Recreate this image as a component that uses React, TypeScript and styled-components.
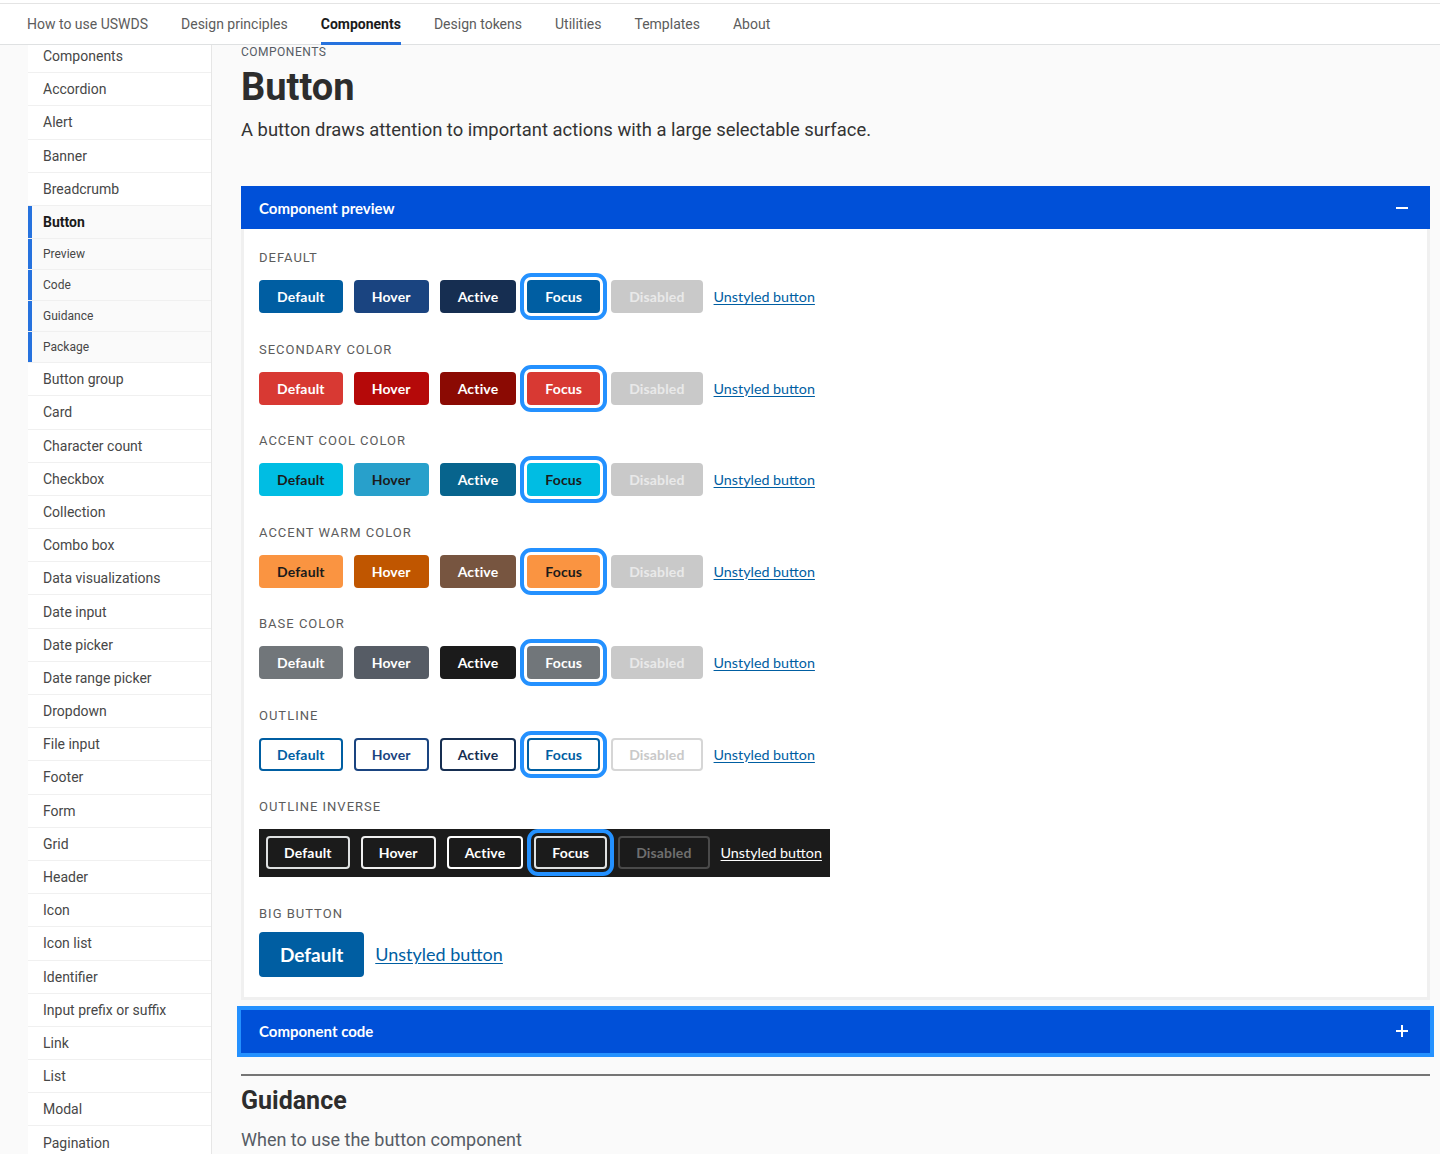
import styled, { createGlobalStyle } from "styled-components"

const GlobalStyle = createGlobalStyle`
  html, body {
    margin: 0;
    padding: 0;
    background: #fafafa;
    font-family: Roboto, "Liberation Sans", sans-serif;
    color: #1b1b1b;
  }
  * {
    box-sizing: border-box;
  }
`

const SANS = `Roboto, "Liberation Sans", sans-serif`
const SOURCE = `Lato, "Open Sans", sans-serif`

type Tone = { bg: string; fg: string; ring?: string }

interface Variant {
  label: string
  default: Tone
  hover: Tone
  active: Tone
  disabled: Tone
}

const disabledSolid: Tone = { bg: "#c9c9c9", fg: "#e9e9e9" }

const variants: Variant[] = [
  {
    label: "Default",
    default: { bg: "#005ea2", fg: "#fff" },
    hover: { bg: "#1a4480", fg: "#fff" },
    active: { bg: "#162e51", fg: "#fff" },
    disabled: disabledSolid,
  },
  {
    label: "Secondary color",
    default: { bg: "#d83933", fg: "#fff" },
    hover: { bg: "#b50909", fg: "#fff" },
    active: { bg: "#8b0a03", fg: "#fff" },
    disabled: disabledSolid,
  },
  {
    label: "Accent cool color",
    default: { bg: "#00bde3", fg: "#1b1b1b" },
    hover: { bg: "#28a0cb", fg: "#1b1b1b" },
    active: { bg: "#07648d", fg: "#fff" },
    disabled: disabledSolid,
  },
  {
    label: "Accent warm color",
    default: { bg: "#fa9441", fg: "#1b1b1b" },
    hover: { bg: "#c05600", fg: "#fff" },
    active: { bg: "#775540", fg: "#fff" },
    disabled: disabledSolid,
  },
  {
    label: "Base color",
    default: { bg: "#71767a", fg: "#fff" },
    hover: { bg: "#565c65", fg: "#fff" },
    active: { bg: "#1b1b1b", fg: "#fff" },
    disabled: disabledSolid,
  },
  {
    label: "Outline",
    default: { bg: "#fff", fg: "#005ea2", ring: "#005ea2" },
    hover: { bg: "#fff", fg: "#1a4480", ring: "#1a4480" },
    active: { bg: "#fff", fg: "#162e51", ring: "#162e51" },
    disabled: { bg: "#fff", fg: "#c9c9c9", ring: "#d6d6d6" },
  },
]

const inverse: Variant = {
  label: "Outline inverse",
  default: { bg: "transparent", fg: "#fff", ring: "#dfe1e2" },
  hover: { bg: "transparent", fg: "#fff", ring: "#f0f0f0" },
  active: { bg: "transparent", fg: "#fff", ring: "#fff" },
  disabled: { bg: "transparent", fg: "#6f6f6f", ring: "#4a4a4a" },
}

const topLinks = ["How to use USWDS", "Design principles", "Components", "Design tokens", "Utilities", "Templates", "About"]

const sideBefore = ["Components", "Accordion", "Alert", "Banner", "Breadcrumb"]
const sideSub = ["Preview", "Code", "Guidance", "Package"]
const sideAfter = [
  "Button group",
  "Card",
  "Character count",
  "Checkbox",
  "Collection",
  "Combo box",
  "Data visualizations",
  "Date input",
  "Date picker",
  "Date range picker",
  "Dropdown",
  "File input",
  "Footer",
  "Form",
  "Grid",
  "Header",
  "Icon",
  "Icon list",
  "Identifier",
  "Input prefix or suffix",
  "Link",
  "List",
  "Modal",
  "Pagination",
  "Process list",
]

const Page = styled.div`
  display: flex;
  flex-direction: column;
  height: 100vh;
  overflow: hidden;
`

const TopBar = styled.header`
  background: #fff;
  padding-top: 3px;
  flex-shrink: 0;
`

const TopNav = styled.nav`
  display: flex;
  height: 42px;
  padding-left: 10.5px;
  border-top: 1px solid #e4e4e4;
  border-bottom: 1px solid #dfe1e2;
`

const TopLink = styled.a<{ $current?: boolean }>`
  display: flex;
  align-items: center;
  height: 41px;
  margin: 0 16.5px -1px;
  padding-bottom: 2px;
  font-family: ${SANS};
  font-size: 14px;
  font-weight: ${(p) => (p.$current ? 700 : 400)};
  color: ${(p) => (p.$current ? "#1b1b1b" : "#5c5c5c")};
  text-decoration: none;
  box-shadow: ${(p) => (p.$current ? "inset 0 -3px 0 #2672de" : "none")};
`

const Layout = styled.div`
  flex: 1;
  min-height: 0;
  display: flex;
  gap: 29px;
  padding: 0 10px 0 28px;
  overflow: hidden;
`

const Sidebar = styled.ul`
  width: 184px;
  flex-shrink: 0;
  margin: -5px 0 0;
  padding: 0;
  list-style: none;
  background: #fff;
  border-right: 1px solid #e6e6e6;
`

const SideItem = styled.li<{ $sub?: boolean; $current?: boolean; $group?: boolean }>`
  display: flex;
  align-items: center;
  height: ${(p) => (p.$sub ? "31px" : "33.2px")};
  padding-left: 15px;
  border-bottom: 1px solid #f0f0f0;
  font-family: ${SANS};
  font-size: ${(p) => (p.$sub ? "12px" : "14px")};
  font-weight: ${(p) => (p.$current ? 700 : 400)};
  color: ${(p) => (p.$current ? "#1b1b1b" : "#474747")};
  background: ${(p) => (p.$group ? "#fafafa" : "#fff")};
  box-shadow: ${(p) => (p.$group ? "inset 4px 0 0 #2672de" : "none")};
`

const Main = styled.main`
  flex: 1;
  min-width: 0;
`

const Eyebrow = styled.div`
  margin-top: 1px;
  font-family: ${SANS};
  font-size: 12px;
  line-height: 12px;
  letter-spacing: 0.5px;
  color: #565c65;
  text-transform: uppercase;
`

const Title = styled.h1`
  margin: 8px 0 0;
  font-family: ${SANS};
  font-size: 38px;
  line-height: 42px;
  font-weight: 700;
  color: #2d2d2d;
`

const Lead = styled.p`
  margin: 10px 0 0;
  font-family: ${SANS};
  font-size: 18.4px;
  line-height: 24px;
  color: #333;
`

const AccordionHeader = styled.div<{ $focused?: boolean }>`
  display: flex;
  align-items: center;
  justify-content: space-between;
  height: 43px;
  padding: 0 22px 0 18px;
  background: #0050d8;
  color: #fff;
  font-family: ${SOURCE};
  font-size: 15px;
  font-weight: 700;
  outline: ${(p) => (p.$focused ? "4px solid #2491ff" : "none")};
`

const PreviewBlock = styled.section`
  margin-top: 44px;
`

const PreviewBody = styled.div`
  background: #fff;
  border: 3px solid #f0f0f0;
  border-top: 0;
  padding: 21px 16px 20px 15px;
`

const Section = styled.div`
  & + & {
    margin-top: 28.5px;
  }
`

const SectionLabel = styled.div<{ $tight?: boolean }>`
  font-family: ${SANS};
  font-size: 13px;
  line-height: 16px;
  letter-spacing: 1px;
  text-transform: uppercase;
  color: #5c5c5c;
  margin-bottom: ${(p) => (p.$tight ? "10px" : "14px")};
`

const ButtonRow = styled.div`
  display: flex;
  align-items: center;
  gap: 11px;
`

const InverseRow = styled(ButtonRow)`
  display: inline-flex;
  background: #1b1b1b;
  padding: 7px 8px 8px 7px;
`

const Btn = styled.button<{ $tone: Tone; $focus?: boolean; $big?: boolean }>`
  height: ${(p) => (p.$big ? "45px" : "33px")};
  padding: 0 ${(p) => (p.$big ? "21px" : "18px")};
  border: 0;
  border-radius: 4px;
  font-family: ${SOURCE};
  font-size: ${(p) => (p.$big ? "19px" : "14px")};
  font-weight: 700;
  letter-spacing: ${(p) => (p.$big ? "0" : "0.15px")};
  background: ${(p) => p.$tone.bg};
  color: ${(p) => p.$tone.fg};
  box-shadow: ${(p) => (p.$tone.ring ? `inset 0 0 0 2px ${p.$tone.ring}` : "none")};
  outline: ${(p) => (p.$focus ? "4px solid #2491ff" : "none")};
  outline-offset: 3px;
  cursor: pointer;
`

const UnstyledBtn = styled.button<{ $inverse?: boolean; $big?: boolean }>`
  padding: 0;
  border: 0;
  background: none;
  font-family: ${SOURCE};
  font-size: ${(p) => (p.$big ? "18px" : "14.3px")};
  color: ${(p) => (p.$inverse ? "#fff" : "#005ea2")};
  text-decoration: underline;
  text-underline-offset: 2px;
  cursor: pointer;
`

const Divider = styled.hr`
  margin: 21px 0 0;
  border: 0;
  height: 2px;
  background: #757575;
`

const SubTitle = styled.h2`
  margin: 10px 0 0;
  font-family: ${SANS};
  font-size: 25px;
  line-height: 30px;
  font-weight: 700;
  color: #2d2d2d;
`

const Note = styled.p`
  margin: 12px 0 0;
  font-family: ${SANS};
  font-size: 18px;
  line-height: 24px;
  color: #565c65;
`

const CodeBlock = styled.section`
  margin-top: 10px;
`

const MinusIcon = () => (
  <svg width="12" height="12" viewBox="0 0 12 12" aria-hidden>
    <rect x="0" y="5" width="12" height="2" fill="#fff" />
  </svg>
)

const PlusIcon = () => (
  <svg width="12" height="12" viewBox="0 0 12 12" aria-hidden>
    <rect x="0" y="5" width="12" height="2" fill="#fff" />
    <rect x="5" y="0" width="2" height="12" fill="#fff" />
  </svg>
)

const ButtonSet = ({ v, inverse: inv }: { v: Variant; inverse?: boolean }) => (
  <>
    <Btn $tone={v.default}>Default</Btn>
    <Btn $tone={v.hover}>Hover</Btn>
    <Btn $tone={v.active}>Active</Btn>
    <Btn $tone={v.default} $focus>
      Focus
    </Btn>
    <Btn $tone={v.disabled}>Disabled</Btn>
    <UnstyledBtn $inverse={inv}>Unstyled button</UnstyledBtn>
  </>
)

const App = () => (
  <>
    <GlobalStyle />
    <Page>
      <TopBar>
        <TopNav>
          {topLinks.map((l) => (
            <TopLink key={l} $current={l === "Components"}>
              {l}
            </TopLink>
          ))}
        </TopNav>
      </TopBar>

      <Layout>
        <Sidebar>
          {sideBefore.map((s) => (
            <SideItem key={s}>{s}</SideItem>
          ))}
          <SideItem $current $group>
            Button
          </SideItem>
          {sideSub.map((s) => (
            <SideItem key={s} $sub $group>
              {s}
            </SideItem>
          ))}
          {sideAfter.map((s) => (
            <SideItem key={s}>{s}</SideItem>
          ))}
        </Sidebar>

        <Main>
          <Eyebrow>Components</Eyebrow>
          <Title>Button</Title>
          <Lead>A button draws attention to important actions with a large selectable surface.</Lead>

          <PreviewBlock>
            <AccordionHeader>
              <span>Component preview</span>
              <MinusIcon />
            </AccordionHeader>
            <PreviewBody>
              {variants.map((v) => (
                <Section key={v.label}>
                  <SectionLabel>{v.label}</SectionLabel>
                  <ButtonRow>
                    <ButtonSet v={v} />
                  </ButtonRow>
                </Section>
              ))}

              <Section>
                <SectionLabel>{inverse.label}</SectionLabel>
                <InverseRow>
                  <ButtonSet v={inverse} inverse />
                </InverseRow>
              </Section>

              <Section>
                <SectionLabel $tight>Big button</SectionLabel>
                <ButtonRow>
                  <Btn $tone={variants[0].default} $big>
                    Default
                  </Btn>
                  <UnstyledBtn $big>Unstyled button</UnstyledBtn>
                </ButtonRow>
              </Section>
            </PreviewBody>
          </PreviewBlock>

          <CodeBlock>
            <AccordionHeader $focused>
              <span>Component code</span>
              <PlusIcon />
            </AccordionHeader>
          </CodeBlock>

          <Divider />
          <SubTitle>Guidance</SubTitle>
          <Note>When to use the button component</Note>
        </Main>
      </Layout>
    </Page>
  </>
)

export default App
